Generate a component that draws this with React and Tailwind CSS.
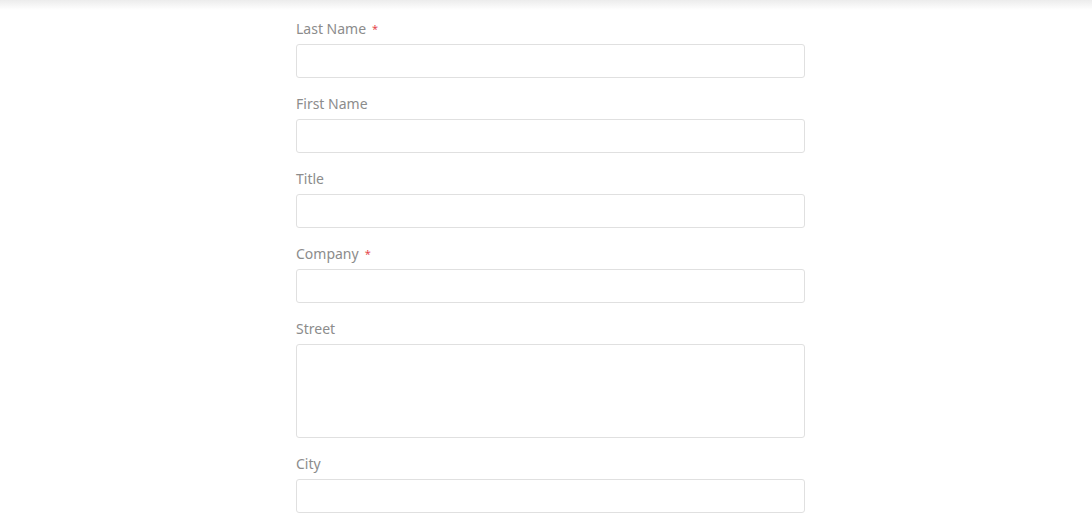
export default function App() {
  const fields = [
    { label: "Last Name", required: true },
    { label: "First Name" },
    { label: "Title" },
    { label: "Company", required: true },
    { label: "Street", tall: true },
    { label: "City" },
  ];

  return (
    <div
      className="min-h-screen bg-white"
      style={{ fontFamily: "'Noto Sans', 'Open Sans', sans-serif" }}
    >
      <div className="h-[10px] bg-gradient-to-b from-[#ececec] to-white" />
      <div className="w-[518px] mx-auto pl-[9px] pt-[10px]">
        {fields.map((f) => (
          <Field key={f.label} {...f} />
        ))}
      </div>
    </div>
  );
}

function Field({ label, required, tall }) {
  return (
    <div className="mb-[17px]">
      <div className="h-[17px] pt-px leading-4 text-[14px] text-[#8c8c8c] mb-[7px] flex items-center">
        {label}
        {required && <span className="ml-[6px] text-[#e5484d] text-[11px]">*</span>}
      </div>
      {tall ? (
        <textarea className="block w-full h-[94px] border border-[#e0e0e0] rounded-[3px] resize-none outline-none" />
      ) : (
        <input className="block w-full h-[34px] border border-[#e0e0e0] rounded-[3px] outline-none" />
      )}
    </div>
  );
}
